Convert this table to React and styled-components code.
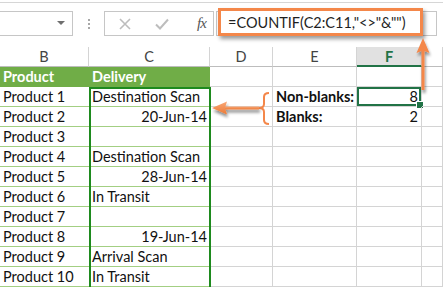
import React from "react";
import styled, { createGlobalStyle, css } from "styled-components";

const Global = createGlobalStyle`
  html, body { margin: 0; padding: 0; background: #fff; overflow: hidden; }
  * { box-sizing: border-box; }
`;

const ORANGE = "#f4874a";
const CELL_FONT = `"Lato", "Liberation Sans", sans-serif`;

const Sheet = styled.div`
  position: relative;
  width: 443px;
  height: 287px;
  overflow: hidden;
  background: #fff;
  border-top: 2px solid #fff;
  font-family: ${CELL_FONT};
`;

const TopRule = styled.div`
  position: absolute;
  left: 0;
  right: 0;
  top: 0;
  height: 1px;
  background: #d6d6d6;
`;

const Toolbar = styled.div`
  display: flex;
  align-items: stretch;
  height: 25px;
  margin-top: 9px;
`;

const NameBox = styled.div`
  position: relative;
  width: 75px;
  margin-left: -2px;
  border: 1px solid #c6c6c6;
  background: #fff;
`;

const Caret = styled.span`
  position: absolute;
  right: 7px;
  top: 9px;
  width: 0;
  height: 0;
  border-left: 4px solid transparent;
  border-right: 4px solid transparent;
  border-top: 4px solid #6f6f6f;
`;

const Grip = styled.div`
  width: 31px;
  display: flex;
  flex-direction: column;
  align-items: center;
  justify-content: center;
  gap: 2px;
  & > i {
    display: block;
    width: 2px;
    height: 2px;
    background: #a8a8a8;
  }
`;

const FxButtons = styled.div`
  width: 110px;
  border: 1px solid #c6c6c6;
  display: flex;
  align-items: center;
  gap: 24px;
  padding-left: 14px;
  color: #b9b9b9;
`;

const FxLabel = styled.span`
  font-family: "Liberation Serif", serif;
  font-style: italic;
  font-size: 15px;
  color: #555;
  letter-spacing: -1px;
  margin-left: 4px;
`;

const FormulaInput = styled.div`
  position: relative;
  flex: 1;
  margin-left: 2px;
  margin-right: 6px;
  border: 1px solid #c6c6c6;
  background: #fff;
`;

const FormulaFrame = styled.div`
  position: absolute;
  left: 1px;
  top: -4px;
  width: 205px;
  height: 28px;
  border: 3px solid ${ORANGE};
  background: #fff;
  box-shadow: 2px 3px 4px rgba(0, 0, 0, 0.4);
  display: flex;
  align-items: center;
  padding-left: 7px;
  font-family: ${CELL_FONT};
  font-size: 14.5px;
  color: #1f1f1f;
  white-space: nowrap;
`;

const Grid = styled.div`
  display: grid;
  grid-template-columns: 89px 121px 63px 84px 65px 1fr;
  grid-auto-rows: 20px;
  margin-top: 11px;
`;

const ColHead = styled.div`
  display: flex;
  align-items: center;
  justify-content: center;
  font-size: 14.5px;
  color: #444;
  background: #fff;
  border-right: 1px solid #d4d4d4;
  border-bottom: 1px solid #bdbdbd;
  ${(p) =>
    p.$active &&
    css`
      background: #e1e1e1;
      color: #217346;
      font-weight: 700;
      border-bottom: 2px solid #217346;
    `}
`;

const Cell = styled.div`
  position: relative;
  display: flex;
  align-items: center;
  justify-content: ${(p) => (p.$right ? "flex-end" : "flex-start")};
  padding: 0 ${(p) => (p.$right ? "3px" : "2px")} 0 3px;
  font-size: 14.5px;
  color: #111;
  white-space: nowrap;
  overflow: visible;
  font-weight: ${(p) => (p.$bold ? 700 : 400)};
  border-right: 1px solid #d4d4d4;
  border-bottom: 1px solid #d4d4d4;
  ${(p) =>
    p.$table &&
    css`
      border-right: none;
      border-bottom: 1px solid #a3cf83;
    `}
  ${(p) =>
    p.$banner &&
    css`
      background: #70ad47;
      color: #fff;
      font-weight: 700;
      border-right: none;
      border-bottom: 1px solid #70ad47;
    `}
  ${(p) =>
    p.$selected &&
    css`
      box-shadow: inset 0 0 0 2px #217346;
      &::after {
        content: "";
        position: absolute;
        right: -3px;
        bottom: -3px;
        width: 6px;
        height: 6px;
        background: #217346;
        border: 1px solid #fff;
      }
    `}
`;

const RangeOutline = styled.div`
  position: absolute;
  left: 89px;
  top: 85px;
  width: 122px;
  height: 202px;
  border: 2px solid #1e8a1e;
  pointer-events: none;
`;

const Overlay = styled.svg`
  position: absolute;
  left: 0;
  top: 0;
  pointer-events: none;
  overflow: visible;
`;

const rows = [
  ["Product 1", "Destination Scan", false],
  ["Product 2", "20-Jun-14", true],
  ["Product 3", "", false],
  ["Product 4", "Destination Scan", false],
  ["Product 5", "28-Jun-14", true],
  ["Product 6", "In Transit", false],
  ["Product 7", "", false],
  ["Product 8", "19-Jun-14", true],
  ["Product 9", "Arrival Scan", false],
  ["Product 10", "In Transit", false],
];

const side = {
  0: { label: "Non-blanks:", value: "8", selected: true },
  1: { label: "Blanks:", value: "2" },
};

export default function App() {
  return (
    <>
      <Global />
      <Sheet>
        <TopRule />
        <Toolbar>
          <NameBox>
            <Caret />
          </NameBox>
          <Grip>
            <i />
            <i />
            <i />
          </Grip>
          <FxButtons>
            <svg width="12" height="12" viewBox="0 0 12 12">
              <path d="M1 1L11 11M11 1L1 11" stroke="#bdbdbd" strokeWidth="1.6" />
            </svg>
            <svg width="14" height="12" viewBox="0 0 14 12">
              <path d="M1 6.5L5 10.5L13 1.5" stroke="#bdbdbd" strokeWidth="2" fill="none" />
            </svg>
            <FxLabel>fx</FxLabel>
          </FxButtons>
          <FormulaInput>
            <FormulaFrame>=COUNTIF(C2:C11,"&lt;&gt;"&amp;"")</FormulaFrame>
          </FormulaInput>
        </Toolbar>

        <Grid>
          {["B", "C", "D", "E", "F", ""].map((l) => (
            <ColHead key={l} $active={l === "F"}>
              {l}
            </ColHead>
          ))}

          <Cell $banner>Product</Cell>
          <Cell $banner>Delivery</Cell>
          <Cell />
          <Cell />
          <Cell />
          <Cell />

          {rows.map(([name, status, isDate], i) => (
            <React.Fragment key={name}>
              <Cell $table>{name}</Cell>
              <Cell $table $right={isDate}>
                {status}
              </Cell>
              <Cell />
              <Cell $bold>{side[i] ? side[i].label : ""}</Cell>
              <Cell $right $selected={side[i] && side[i].selected}>
                {side[i] ? side[i].value : ""}
              </Cell>
              <Cell />
            </React.Fragment>
          ))}
        </Grid>

        <RangeOutline />

        <Overlay width="443" height="287" viewBox="0 0 443 287">
          <defs>
            <filter id="drop" x="-20%" y="-20%" width="160%" height="180%">
              <feGaussianBlur in="SourceAlpha" stdDeviation="1.6" />
              <feOffset dx="1" dy="3" result="b" />
              <feComponentTransfer>
                <feFuncA type="linear" slope="0.45" />
              </feComponentTransfer>
              <feMerge>
                <feMergeNode />
                <feMergeNode in="SourceGraphic" />
              </feMerge>
            </filter>
            <linearGradient id="hgrad" x1="0" y1="0" x2="0" y2="1">
              <stop offset="0" stopColor="#f9a777" />
              <stop offset="1" stopColor="#ec7a36" />
            </linearGradient>
          </defs>

          {/* curly brace grouping the two labels */}
          <path
            d="M269 91 Q264 91 264 95 L264 102 Q264 106 259 106 Q264 106 264 110 L264 118 Q264 122 269 122"
            stroke={ORANGE}
            strokeWidth="2"
            fill="none"
          />

          {/* arrow pointing back to the counted range */}
          <g filter="url(#drop)">
            <rect x="224" y="104.5" width="35" height="3" fill="url(#hgrad)" />
            <path d="M212 106 L227 99.5 L225 106 L227 112.5 Z" fill="url(#hgrad)" />
          </g>

          {/* arrow from the result cell up to the formula */}
          <g filter="url(#drop)">
            <rect x="421.5" y="47" width="3" height="41" fill={ORANGE} />
            <path d="M423 36 L429.5 51 L423 48.5 L416.5 51 Z" fill={ORANGE} />
          </g>
        </Overlay>
      </Sheet>
    </>
  );
}
